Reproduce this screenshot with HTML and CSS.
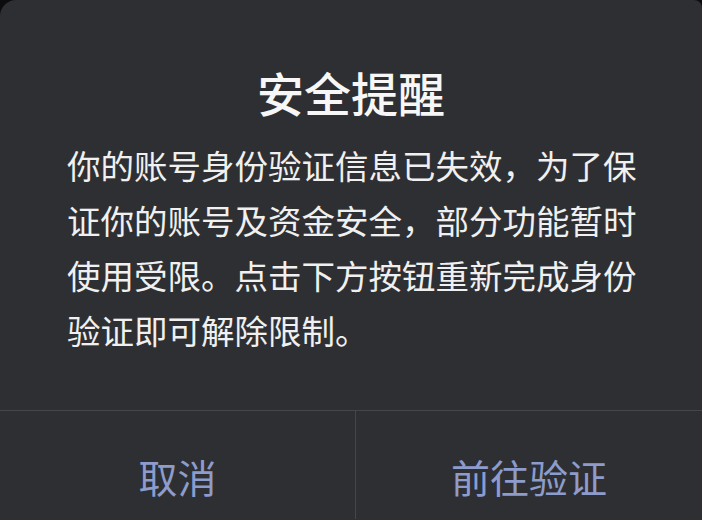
FILE: index.html
```html
<!DOCTYPE html>
<html lang="zh-CN">
<head>
<meta charset="utf-8">
<title>安全提醒</title>
<link rel="stylesheet" href="styles.css">
</head>
<body>
<div class="dialog">
  <h1 class="title">安全提醒</h1>
  <p class="message">你的账号身份验证信息已失效，为了保<br>证你的账号及资金安全，部分功能暂时<br>使用受限。点击下方按钮重新完成身份<br>验证即可解除限制。</p>
  <div class="actions">
    <button class="btn">取消</button>
    <button class="btn">前往验证</button>
  </div>
</div>
</body>
</html>
```

FILE: styles.css
```css
html, body {
  margin: 0;
  padding: 0;
  width: 702px;
  height: 520px;
  overflow: hidden;
  background: #0c0c0e;
}
.dialog {
  width: 702px;
  height: 520px;
  overflow: hidden;
  background: #2e2f33;
  border-top-left-radius: 16px;
  border-top-right-radius: 8px;
  display: flex;
  flex-direction: column;
  font-family: "Noto Sans CJK SC", "Noto Sans", sans-serif;
}
.title {
  margin: 61px 0 0;
  font-size: 47px;
  line-height: 61px;
  font-weight: 500;
  color: #f7f7f7;
  text-align: center;
}
.message {
  margin: 15px 0 0;
  padding: 0 0 0 67px;
  font-size: 33.5px;
  line-height: 55px;
  font-weight: 400;
  color: #f0f0f0;
  white-space: nowrap;
}
.actions {
  margin-top: 53px;
  display: grid;
  grid-template-columns: 355px 1fr;
  border-top: 1px solid #45464b;
}
.btn {
  box-sizing: border-box;
  height: 108px;
  padding: 22px 0 0;
  background: transparent;
  border: none;
  font-family: inherit;
  font-size: 39px;
  line-height: 1.4;
  color: #8d9ccb;
}
.btn + .btn {
  border-left: 1px solid #45464b;
}
```
